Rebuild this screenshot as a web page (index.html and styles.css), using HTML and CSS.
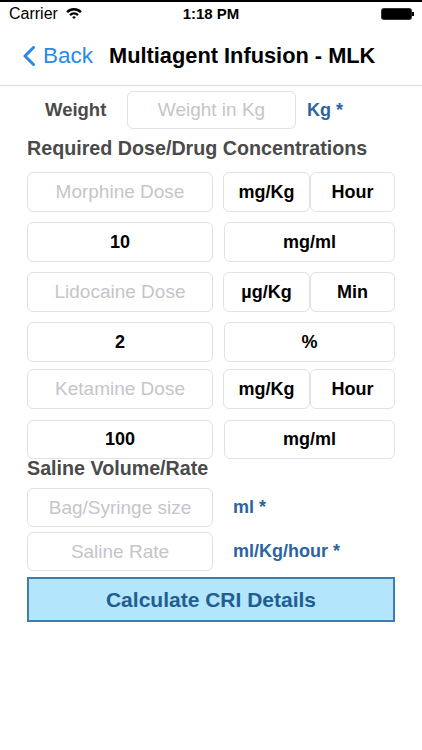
FILE: index.html
```html
<!DOCTYPE html>
<html>
<head>
<meta charset="utf-8">
<link rel="stylesheet" href="styles.css">
</head>
<body>
<div class="status">
  <div class="carrier">Carrier
    <svg class="wifi" width="16" height="12" viewBox="0 0 16 12">
      <path d="M0.22 4.22 A11 11 0 0 1 15.78 4.22 L14.08 5.92 A8.6 8.6 0 0 0 1.92 5.92 Z" fill="#000"/>
      <path d="M3.19 7.19 A6.8 6.8 0 0 1 12.81 7.19 L11.11 8.89 A4.4 4.4 0 0 0 4.89 8.89 Z" fill="#000"/>
      <path d="M8 12 L6.16 10.16 A2.6 2.6 0 0 1 9.84 10.16 Z" fill="#000"/>
    </svg>
  </div>
  <div class="time">1:18 PM</div>
  <div class="battery"><div class="batbody"></div><div class="batnub"></div></div>
</div>
<div class="nav">
  <div class="back">
    <svg class="chev" width="14" height="20" viewBox="0 0 14 20">
      <path d="M11.5 1.5 L3 10 L11.5 18.5" fill="none" stroke="#2a89e6" stroke-width="3" stroke-linecap="round" stroke-linejoin="round"/>
    </svg>
    <span>Back</span>
  </div>
  <div class="title">Multiagent Infusion - MLK</div>
</div>
<div class="content">
  <div class="weight-row">
    <div class="weight-label">Weight</div>
    <div class="box weight-box"><span class="ph">Weight in Kg</span></div>
    <div class="unit weight-unit">Kg *</div>
  </div>
  <div class="heading h1">Required Dose/Drug Concentrations</div>

  <div class="row r1">
    <div class="box left"><span class="ph">Morphine Dose</span></div>
    <div class="box unit-a"><span class="val">mg/Kg</span></div>
    <div class="box unit-b"><span class="val">Hour</span></div>
  </div>
  <div class="row r2">
    <div class="box left"><span class="val">10</span></div>
    <div class="box wide"><span class="val">mg/ml</span></div>
  </div>
  <div class="row r2">
    <div class="box left"><span class="ph">Lidocaine Dose</span></div>
    <div class="box unit-a"><span class="val">µg/Kg</span></div>
    <div class="box unit-b"><span class="val">Min</span></div>
  </div>
  <div class="row r2">
    <div class="box left"><span class="val">2</span></div>
    <div class="box wide"><span class="val">%</span></div>
  </div>
  <div class="row r5">
    <div class="box left"><span class="ph">Ketamine Dose</span></div>
    <div class="box unit-a"><span class="val">mg/Kg</span></div>
    <div class="box unit-b"><span class="val">Hour</span></div>
  </div>
  <div class="row r6">
    <div class="box left"><span class="val">100</span></div>
    <div class="box wide"><span class="val">mg/ml</span></div>
  </div>

  <div class="heading h2">Saline Volume/Rate</div>
  <div class="row s1">
    <div class="box left"><span class="ph">Bag/Syringe size</span></div>
    <div class="unit side-unit">ml *</div>
  </div>
  <div class="row s2">
    <div class="box left"><span class="ph">Saline Rate</span></div>
    <div class="unit side-unit">ml/Kg/hour *</div>
  </div>
  <div class="button">Calculate CRI Details</div>
</div>
</body>
</html>
```
FILE: styles.css
```css
html, body {
  margin: 0;
  padding: 0;
  background: #fff;
}
body {
  width: 422px;
  height: 750px;
  font-family: "Liberation Sans", Arial, sans-serif;
  color: #000;
  overflow: hidden;
}
.status {
  box-sizing: border-box;
  height: 26px;
  border-top: 2px solid #000;
  display: flex;
  align-items: center;
  justify-content: space-between;
  padding: 0 8px 0 9px;
  position: relative;
}
.carrier {
  font-size: 16px;
  display: flex;
  align-items: center;
  gap: 8px;
  line-height: 20px;
}
.wifi {
  margin-top: -2px;
}
.time {
  position: absolute;
  left: 0;
  right: 0;
  text-align: center;
  font-size: 15px;
  font-weight: bold;
  line-height: 20px;
  pointer-events: none;
}
.battery {
  display: flex;
  align-items: center;
}
.batbody {
  width: 29px;
  height: 10px;
  background: #000;
  border-radius: 2px;
  box-shadow: 0 0 0 1px #333;
}
.batnub {
  width: 2px;
  height: 4px;
  background: #000;
  margin-left: 1px;
}
.nav {
  box-sizing: border-box;
  height: 60px;
  border-bottom: 1px solid #dcdcdc;
  display: flex;
  align-items: center;
  padding: 0 0 0 22px;
}
.back {
  display: flex;
  align-items: center;
  color: #2a89e6;
  font-size: 22.5px;
  width: 87px;
}
.chev {
  margin-right: 7px;
  margin-top: 1px;
}
.title {
  font-size: 21.8px;
  font-weight: bold;
  color: #000;
}
.content {
  padding: 0 27px;
  display: flex;
  flex-direction: column;
}
.weight-row {
  margin-top: 5px;
  display: flex;
  align-items: center;
  height: 38px;
}
.weight-label {
  margin-left: 18px;
  width: 82px;
  font-size: 18.5px;
  font-weight: bold;
  color: #4a4a4a;
}
.box {
  box-sizing: border-box;
  border: 1px solid #e2e2e4;
  border-radius: 6px;
  display: flex;
  align-items: center;
  justify-content: center;
  height: 100%;
  background: #fff;
}
.weight-box {
  width: 169px;
}
.ph {
  color: #c5c5cb;
  font-size: 19px;
}
.val {
  font-size: 18px;
  font-weight: bold;
  color: #000;
}
.unit {
  color: #2c64a0;
  font-size: 18px;
  font-weight: bold;
}
.weight-unit {
  margin-left: 11px;
}
.heading {
  font-size: 19.7px;
  font-weight: bold;
  color: #4a4a4a;
  white-space: nowrap;
}
.h1 {
  margin-top: 7px;
  line-height: 24px;
}
.h2 {
  line-height: 18px;
}
.row {
  display: flex;
  align-items: center;
  height: 40px;
}
.r1 { margin-top: 12px; }
.r2 { margin-top: 10px; }
.r5 { margin-top: 7px; }
.r6 { margin-top: 11px; height: 39px; }
.left {
  width: 186px;
}
.unit-a {
  margin-left: 10px;
  width: 87px;
}
.unit-b {
  width: 85px;
}
.wide {
  margin-left: 11px;
  width: 171px;
}
.s1 { margin-top: 11px; height: 39px; }
.s2 { margin-top: 5px; height: 39px; }
.side-unit {
  margin-left: 20px;
}
.button {
  box-sizing: border-box;
  margin-top: 6px;
  height: 45px;
  width: 368px;
  background: #b3e5fc;
  border: 2px solid #3f7dad;
  display: flex;
  align-items: center;
  justify-content: center;
  font-size: 21px;
  font-weight: bold;
  color: #1f5e90;
}
```
